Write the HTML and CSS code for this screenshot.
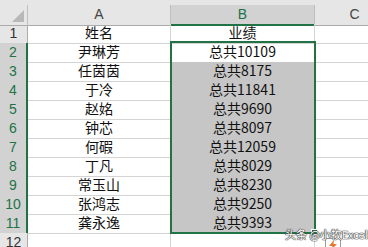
FILE: index.html
```html
<!DOCTYPE html>
<html lang="zh-CN">
<head>
  <meta charset="UTF-8" />
  <title>业绩表</title>
  <link rel="stylesheet" href="styles.css">
</head>
<body>
  <div class="sheet">
    <div class="strip"></div>

    <div class="row head">
      <div class="cell corner"><span class="tri"></span></div>
      <div class="cell colhead">A</div>
      <div class="cell colhead on">B</div>
      <div class="cell colhead">C</div>
    </div>

    <div class="row">
      <div class="cell rowhead">1</div>
      <div class="cell">姓名</div>
      <div class="cell">业绩</div>
      <div class="cell"></div>
    </div>
    <div class="row">
      <div class="cell rowhead on">2</div>
      <div class="cell">尹琳芳</div>
      <div class="cell">总共10109</div>
      <div class="cell"></div>
    </div>
    <div class="row">
      <div class="cell rowhead on">3</div>
      <div class="cell">任茵茵</div>
      <div class="cell sel">总共8175</div>
      <div class="cell"></div>
    </div>
    <div class="row">
      <div class="cell rowhead on">4</div>
      <div class="cell">于冷</div>
      <div class="cell sel">总共11841</div>
      <div class="cell"></div>
    </div>
    <div class="row">
      <div class="cell rowhead on">5</div>
      <div class="cell">赵姳</div>
      <div class="cell sel">总共9690</div>
      <div class="cell"></div>
    </div>
    <div class="row">
      <div class="cell rowhead on">6</div>
      <div class="cell">钟芯</div>
      <div class="cell sel">总共8097</div>
      <div class="cell"></div>
    </div>
    <div class="row">
      <div class="cell rowhead on">7</div>
      <div class="cell">何碬</div>
      <div class="cell sel">总共12059</div>
      <div class="cell"></div>
    </div>
    <div class="row">
      <div class="cell rowhead on">8</div>
      <div class="cell">丁凡</div>
      <div class="cell sel">总共8029</div>
      <div class="cell"></div>
    </div>
    <div class="row">
      <div class="cell rowhead on">9</div>
      <div class="cell">常玉山</div>
      <div class="cell sel">总共8230</div>
      <div class="cell"></div>
    </div>
    <div class="row">
      <div class="cell rowhead on">10</div>
      <div class="cell">张鸿志</div>
      <div class="cell sel">总共9250</div>
      <div class="cell"></div>
    </div>
    <div class="row">
      <div class="cell rowhead on">11</div>
      <div class="cell">龚永逸</div>
      <div class="cell sel">总共9393</div>
      <div class="cell"></div>
    </div>
    <div class="row">
      <div class="cell rowhead">12</div>
      <div class="cell"></div>
      <div class="cell"></div>
      <div class="cell"></div>
    </div>

    <div class="selection"><span class="handle"></span></div>

    <div class="quick">
      <svg width="16" height="14" viewBox="0 0 16 14">
        <rect x="0.5" y="0.5" width="15" height="13" fill="#fff" stroke="#9a9a9a"/>
        <path d="M9 2 L4 8 H7.5 L6 12 L12 6 H8.5 Z" fill="#e8762d"/>
      </svg>
    </div>

    <div class="mark">头条 @小牧Excel</div>
  </div>
</body>
</html>
```

FILE: styles.css
```css
body {
  margin: 0;
  background-color: white;
  font-family: "Noto Sans CJK SC", "Noto Sans", sans-serif;
  overflow: hidden;
}
.sheet {
  position: relative;
  width: 368px;
  height: 247px;
  overflow: hidden;
}
.strip {
  height: 5px;
  background-color: #e6e6e6;
}
.row {
  display: grid;
  grid-template-columns: 28px 143px 144px 80px;
  height: 19px;
}
.cell {
  box-sizing: border-box;
  border-right: 1px solid #d4d4d4;
  border-bottom: 1px solid #d4d4d4;
  font-size: 14px;
  line-height: 17px;
  color: #111;
  text-align: center;
  white-space: nowrap;
}
.head .cell {
  background-color: #e6e6e6;
  border-right: 1px solid #bfbfbf;
  border-bottom: 1px solid #ababab;
  font-family: "Liberation Sans", Arial, sans-serif;
  font-size: 14px;
  line-height: 19px;
  color: #444;
}
.head .colhead.on {
  background-color: #d2d2d2;
  border-bottom: 2px solid #217346;
  color: #217346;
}
.corner {
  position: relative;
}
.tri {
  position: absolute;
  right: 3px;
  bottom: 3px;
  width: 0;
  height: 0;
  border-left: 12px solid transparent;
  border-bottom: 12px solid #b8b8b8;
}
.rowhead {
  background-color: #e6e6e6;
  border-right: 1px solid #ababab;
  border-bottom: 1px solid #c8c8c8;
  font-family: "Liberation Sans", Arial, sans-serif;
  font-size: 14px;
  line-height: 19px;
  color: #333;
}
.rowhead.on {
  background-color: #d2d2d2;
  border-right: 2px solid #217346;
  color: #217346;
}
.sel {
  background-color: #c6c6c6;
  border-bottom-color: #a8a8a8;
}
.selection {
  position: absolute;
  left: 170px;
  top: 41px;
  width: 146px;
  height: 193px;
  box-sizing: border-box;
  border: 2px solid #217346;
}
.handle {
  position: absolute;
  right: -4px;
  bottom: -4px;
  width: 5px;
  height: 5px;
  background-color: #217346;
  border: 1px solid #fff;
}
.quick {
  position: absolute;
  left: 325px;
  top: 238px;
  line-height: 0;
}
.mark {
  position: absolute;
  left: 285px;
  top: 227px;
  font-size: 11px;
  line-height: 14px;
  color: #fff;
  text-shadow: 0 0 1px #444, 0 0 1px #444, 0 0 1px #444, 0 0 1px #444;
  white-space: nowrap;
}
```
